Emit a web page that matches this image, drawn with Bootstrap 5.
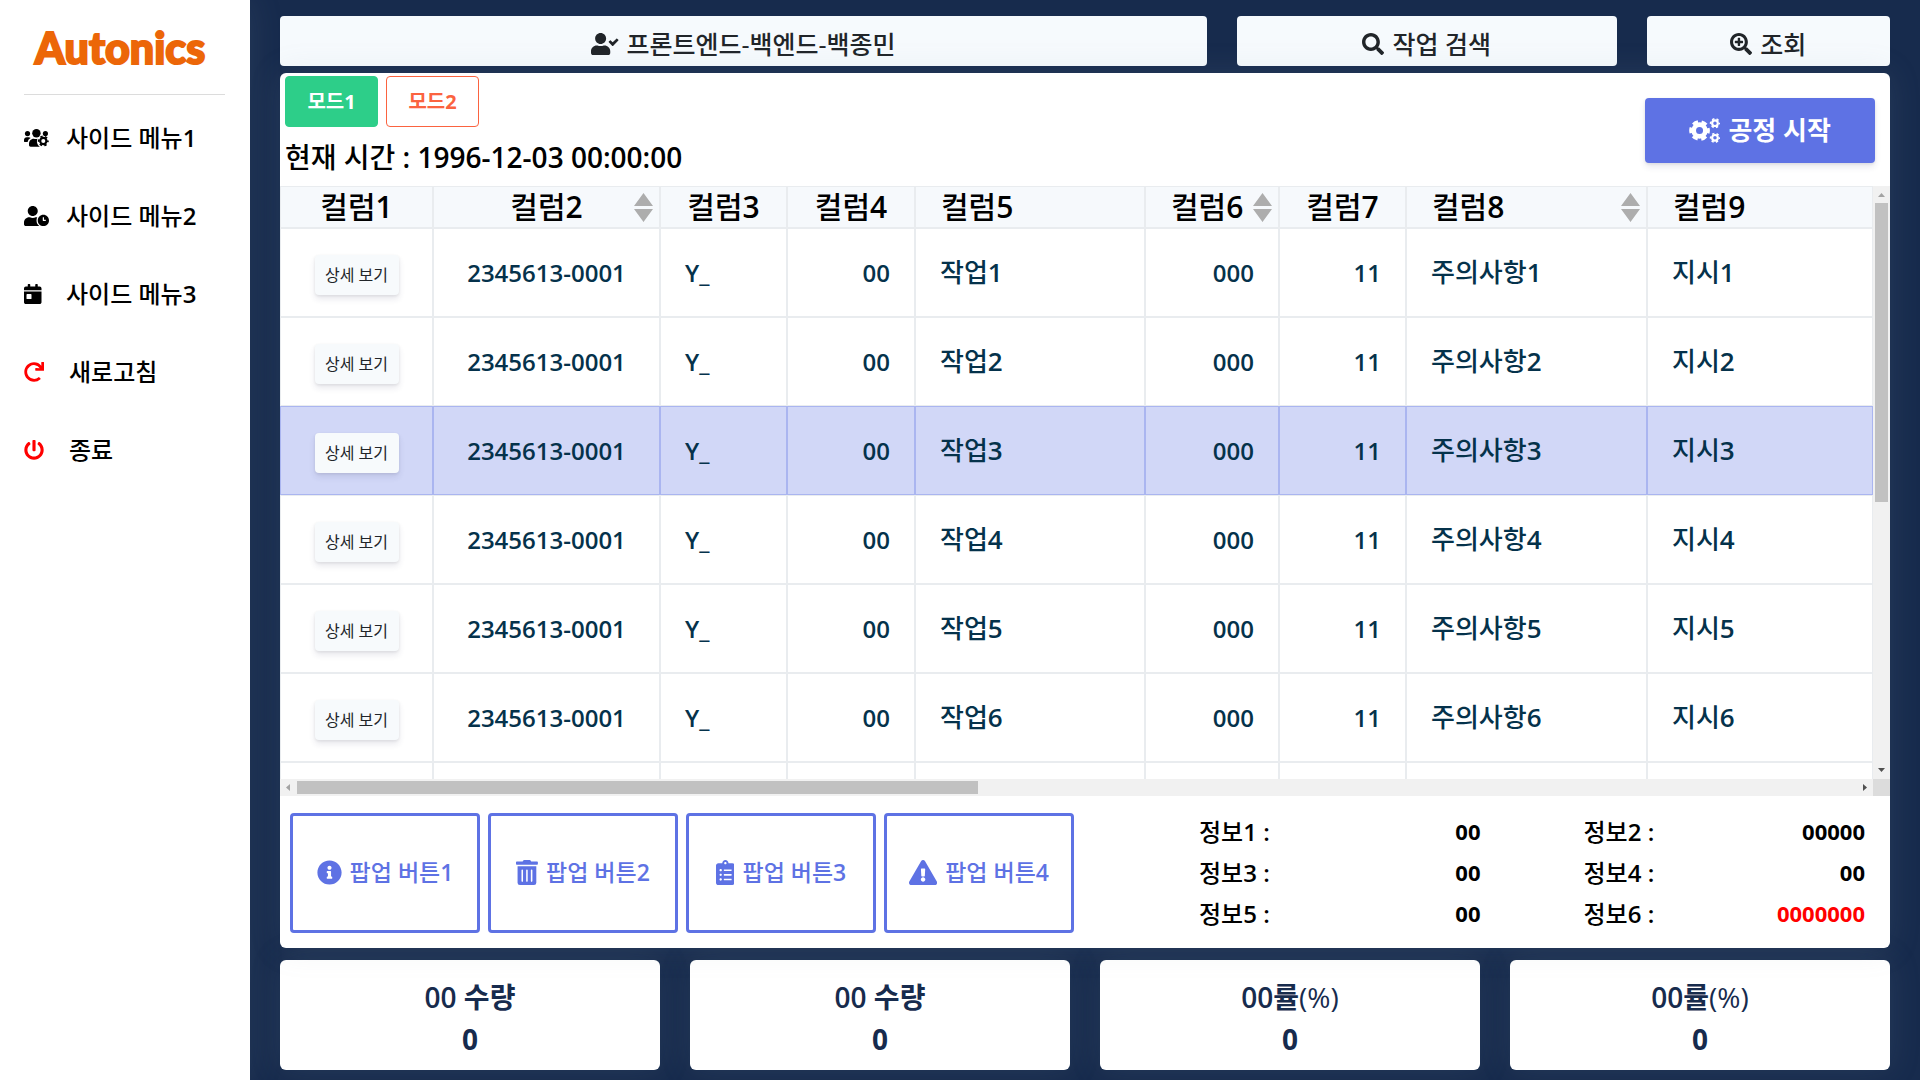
<!DOCTYPE html>
<html lang="ko">
<head>
<meta charset="utf-8">
<meta name="viewport" content="width=device-width, initial-scale=1">
<title>Autonics</title>
<link href="https://cdn.jsdelivr.net/npm/bootstrap@5.3.0/dist/css/bootstrap.min.css" rel="stylesheet">
<style>
:root { --navy: #172b4d; --indigo: #5e72e4; --line: #e9ecef; --glow: 0 0 32px rgba(136, 152, 170, .15); }
body { background: var(--navy); color: #000; font-family: "Open Sans", "Noto Sans CJK KR", sans-serif; font-weight: 500; line-height: 1.5; }
svg.ico { height: 1em; width: auto; fill: currentColor; flex: none; }
.side { width: 250px; flex: none; background: #fff; padding: 18px 24px; box-shadow: var(--glow); }
.brand { font: 900 43px/60px Lato, sans-serif; color: #ec6608; text-decoration: none; text-align: center; padding-right: 10px; -webkit-text-stroke: 2px #ec6608; }
.side-rule { border-top: 1px solid #dcdcdc; margin: 16px 1px 0 0; }
.side-nav { padding-top: 25px; gap: 42px; }
.side-link { color: #000; font-size: 24px; line-height: 36px; text-decoration: none; white-space: nowrap; }
.side-link svg { height: 20px; }
.side-ico { width: 42px; line-height: 1; display: flex; }
.side-link.alert-link-red .side-ico { color: #f00; width: 45px; }
.page { padding: 16px 30px 10px; min-width: 0; }
.gx-30 { --bs-gutter-x: 30px; }
.btn-top { background: #f6fafd; border: 0; border-radius: 4px; height: 50px; font-size: 25px; line-height: 36px; color: #212529; font-weight: 500; padding: 5px 12px 0; }
.btn-top:hover { background: #fff; }
.btn-top svg { height: 22px; }
.panel { background: #fff; border-radius: 6px; margin-top: 7px; box-shadow: var(--glow); min-height: 0; position: relative; }
.panel-head { height: 113px; padding: 3px 15px 0 5px; }
.btn-mode { width: 93px; height: 51px; font-size: 20px; font-weight: 700; border-radius: 4px; padding: 0; }
.btn-on { background: #2dce89; color: #fff; border: 1px solid #2dce89; }
.btn-off { background: #fff; color: #fb6340; border: 1px solid #fb6340; }
.clock { font-size: 28px; line-height: 36px; font-weight: 500; margin-top: 12px; }
.btn-start { background: var(--indigo); color: #fff; width: 230px; height: 65px; margin-top: 22px; font-size: 26px; font-weight: 700; border-radius: 4px; border: 0; box-shadow: 0 4px 6px rgba(50, 50, 93, .11), 0 1px 3px rgba(0, 0, 0, .08); }
.btn-start svg { height: 25px; }
.grid-port { min-height: 0; min-width: 0; overflow: hidden; }
.work { table-layout: fixed; width: 100%; min-width: 1590px; border-collapse: separate; border-spacing: 0; }
.work th, .work td { border: 1px solid var(--line); vertical-align: middle; white-space: nowrap; overflow: hidden; }
.work th { height: 42px; padding: 0 25px; background: #f6f9fc; font-size: 30px; line-height: 40px; font-weight: 500; position: relative; }
.work td { height: 89px; padding: 0 24px; color: #05324b; font-size: 26px; font-weight: 500; }
.work td.num { font-size: 24px; font-weight: 600; }
.work tr.picked td { background: #d1d7f7; border-color: #aab5f0; }
.sorter { position: absolute; right: 6px; top: 6px; width: 19px; height: 29px; fill: #adadad; }
.btn-detail { background: #f7fafc; color: #212529; width: 84px; height: 40px; margin-top: 4px; padding: 0; font-size: 16px; border: 0; border-radius: 4px; box-shadow: 0 4px 6px rgba(50, 50, 93, .11), 0 1px 3px rgba(0, 0, 0, .08); }
.bar { background: #f1f1f1; flex: none; }
.bar-v { width: 17px; }
.bar-h { height: 17px; }
.bar-corner { width: 17px; height: 17px; background: #dcdcdc; flex: none; }
.bar svg { width: 17px; height: 17px; flex: none; }
.lane { min-width: 0; min-height: 0; flex: 1; }
.thumb-v { background: #c1c1c1; height: 53.5%; margin: 0 2px; }
.thumb-h { background: #c1c1c1; width: 43.7%; height: 13px; margin-top: 2px; }
.panel-foot { padding: 15px 25px 14px 10px; }
.btn-pop { width: 190px; height: 120px; background: #fff; color: var(--indigo); border: 3px solid var(--indigo); border-radius: 4px; font-size: 23px; font-weight: 500; padding: 0; white-space: nowrap; }
.btn-pop svg { height: 25px; }
.facts { display: grid; grid-template-columns: 1fr 1fr; column-gap: 103px; margin: 0 0 0 125px; }
.facts dt { font-size: 24px; line-height: 41px; font-weight: 500; }
.facts dd { font-size: 22px; line-height: 41px; font-weight: 700; margin: 0; }
.facts .hot { color: #f00; }
.stats { margin-top: 12px; }
.stat { background: #fff; color: var(--navy); border-radius: 6px; height: 110px; padding-top: 16px; box-shadow: var(--glow); text-align: center; font-size: 28px; line-height: 42px; font-weight: 600; }
</style>
<script src="https://cdn.jsdelivr.net/npm/bootstrap@5.3.0/dist/js/bootstrap.bundle.min.js"></script>
</head>
<body>
<div class="d-flex vh-100 overflow-hidden">
  <aside class="side d-flex flex-column">
    <a class="brand" href="#">Autonics</a>
    <div class="side-rule"></div>
    <nav class="side-nav d-flex flex-column" aria-label="사이드 메뉴">
      <a class="side-link d-flex align-items-center" href="#"><span class="side-ico"><svg class="ico" viewBox="0 0 640 512" aria-hidden="true"><circle cx="90" cy="142" r="66"/><circle cx="318" cy="132" r="108"/><circle cx="548" cy="142" r="66"/><path d="M0 345v-35c0-45 30-76 72-76h45c22 0 40 8 54 22-42 22-68 52-78 102H14c-8 0-14-5-14-13z"/><path d="M128 440v-34c0-74 48-134 122-134 30 14 65 16 95 6-16 40-20 80-2 122 14 36 36 58 66 78H170c-24 0-42-16-42-40z"/><g fill="none" stroke="currentColor"><circle cx="494" cy="332" r="80" stroke-width="56"/><circle cx="494" cy="332" r="118" stroke-width="44" pathLength="12" stroke-dasharray="1 1" stroke-dashoffset=".5"/></g></svg></span><span>사이드 메뉴<span class="fw-semibold">1</span></span></a>
      <a class="side-link d-flex align-items-center" href="#"><span class="side-ico"><svg class="ico" viewBox="0 0 640 512" aria-hidden="true"><path d="M496 224c-79.600 0-144 64.400-144 144s64.400 144 144 144 144-64.400 144-144-64.400-144-144-144zm64 150.300c0 5.300-4.400 9.700-9.700 9.700h-60.600c-5.300 0-9.700-4.400-9.700-9.700v-76.600c0-5.300 4.400-9.700 9.700-9.700h12.600c5.300 0 9.700 4.400 9.700 9.700V352h38.300c5.300 0 9.700 4.400 9.700 9.700v12.600zM320 368c0-27.800 6.700-54.100 18.200-77.500-8-1.500-16.200-2.500-24.600-2.500h-16.700c-22.200 10.200-46.900 16-72.900 16s-50.600-5.800-72.900-16h-16.700C60.200 288 0 348.200 0 422.400V464c0 26.500 21.500 48 48 48h347.100c-45.300-31.900-75.100-84.500-75.100-144zm-96-112c70.700 0 128-57.300 128-128S294.700 0 224 0 96 57.300 96 128s57.300 128 128 128z"/></svg></span><span>사이드 메뉴<span class="fw-semibold">2</span></span></a>
      <a class="side-link d-flex align-items-center" href="#"><span class="side-ico"><svg class="ico" viewBox="0 0 448 512" aria-hidden="true"><path d="M0 464c0 26.500 21.500 48 48 48h352c26.500 0 48-21.500 48-48V192H0v272zm64-192c0-8.800 7.200-16 16-16h96c8.800 0 16 7.200 16 16v96c0 8.800-7.200 16-16 16H80c-8.800 0-16-7.200-16-16v-96zM400 64h-48V16c0-8.800-7.200-16-16-16h-32c-8.800 0-16 7.200-16 16v48H160V16c0-8.800-7.200-16-16-16h-32c-8.800 0-16 7.200-16 16v48H48C21.500 64 0 85.500 0 112v48h448v-48c0-26.500-21.500-48-48-48z"/></svg></span><span>사이드 메뉴<span class="fw-semibold">3</span></span></a>
      <a class="side-link alert-link-red d-flex align-items-center" href="#"><span class="side-ico"><svg class="ico" viewBox="0 0 512 512" aria-hidden="true"><path d="M500.330 0h-47.410a12 12 0 0 0-12 12.570l4 82.760A247.420 247.420 0 0 0 256 8C119.340 8 7.900 119.530 8 256.190 8.100 393.070 119.100 504 256 504a247.100 247.100 0 0 0 166.180-63.910 12 12 0 0 0 .48-17.430l-34-34a12 12 0 0 0-16.380-.55A176 176 0 1 1 402.100 157.800l-101.530-4.870a12 12 0 0 0-12.570 12v47.410a12 12 0 0 0 12 12h200.330a12 12 0 0 0 12-12V12a12 12 0 0 0-12-12z"/></svg></span>새로고침</a>
      <a class="side-link alert-link-red d-flex align-items-center" href="#"><span class="side-ico"><svg class="ico" viewBox="0 0 512 512" aria-hidden="true"><path d="M400 54.100c63 45 104 118.600 104 201.900 0 136.800-110.800 247.700-247.500 248C120 504.300 8.200 393 8 256.400 7.900 173.100 48.900 99.300 111.800 54.200c11.700-8.300 28-4.800 35 7.700L162.600 90c5.900 10.500 3.100 23.800-6.600 31-41.500 30.800-68 79.600-68 134.900-.1 92.300 74.500 168.100 168 168.100 91.600 0 168.600-74.200 168-169.100-.3-51.800-24.700-101.800-68.100-134-9.700-7.200-12.400-20.500-6.500-30.900l15.800-28.100c7-12.400 23.200-16.100 34.800-7.800zM296 264V24c0-13.300-10.700-24-24-24h-32c-13.300 0-24 10.700-24 24v240c0 13.300 10.700 24 24 24h32c13.300 0 24-10.700 24-24z"/></svg></span>종료</a>
    </nav>
  </aside>

  <main class="page flex-fill d-flex flex-column">
    <div class="row gx-30">
      <div class="col-7"><button type="button" class="btn btn-top w-100 d-flex align-items-center justify-content-center gap-2"><svg class="ico" viewBox="0 0 640 512" aria-hidden="true"><path d="M224 256c70.700 0 128-57.300 128-128S294.700 0 224 0 96 57.300 96 128s57.300 128 128 128zm89.600 32h-16.700c-22.200 10.200-46.900 16-72.900 16s-50.600-5.800-72.900-16h-16.700C60.200 288 0 348.200 0 422.400V464c0 26.500 21.500 48 48 48h352c26.500 0 48-21.500 48-48v-41.600c0-74.200-60.200-134.400-134.400-134.400z"/><path d="M636.600 159.600l-28.300-28.500c-4.700-4.800-12.400-4.800-17.200 0L504.300 217.600l-44.900-45.300c-4.700-4.800-12.400-4.800-17.100-.1l-28.400 28.300c-4.700 4.700-4.800 12.400-.1 17.100l81.900 82.600c4.700 4.800 12.400 4.800 17.100.1L636.500 176.700c4.800-4.700 4.800-12.400.1-17.100z"/></svg>프론트엔드-백엔드-백종민</button></div>
      <div class="col-3"><button type="button" class="btn btn-top w-100 d-flex align-items-center justify-content-center gap-2"><svg class="ico" viewBox="0 0 512 512" aria-hidden="true"><path d="M505 442.700L405.300 343c-4.500-4.500-10.600-7-17-7H372c27.600-35.300 44-79.700 44-128C416 93.100 322.900 0 208 0S0 93.100 0 208s93.100 208 208 208c48.300 0 92.700-16.400 128-44v16.300c0 6.400 2.500 12.500 7 17l99.700 99.700c9.400 9.400 24.600 9.400 33.900 0l28.300-28.300c9.400-9.400 9.400-24.600.1-34zM208 336c-70.700 0-128-57.200-128-128 0-70.700 57.200-128 128-128 70.700 0 128 57.200 128 128 0 70.700-57.200 128-128 128z"/></svg>작업 검색</button></div>
      <div class="col-2"><button type="button" class="btn btn-top w-100 d-flex align-items-center justify-content-center gap-2"><svg class="ico" viewBox="0 0 512 512" aria-hidden="true"><path d="M505 442.700L405.300 343c-4.500-4.500-10.600-7-17-7H372c27.600-35.300 44-79.700 44-128C416 93.100 322.900 0 208 0S0 93.100 0 208s93.100 208 208 208c48.300 0 92.700-16.400 128-44v16.300c0 6.400 2.500 12.500 7 17l99.700 99.700c9.400 9.400 24.600 9.400 33.900 0l28.300-28.300c9.400-9.400 9.400-24.600.1-34zM208 344c-75.200 0-136-60.800-136-136 0-75.200 60.800-136 136-136 75.200 0 136 60.800 136 136 0 75.200-60.800 136-136 136z"/><path d="M304 192v32c0 6.600-5.400 12-12 12h-56v56c0 6.600-5.400 12-12 12h-32c-6.600 0-12-5.400-12-12v-56h-56c-6.600 0-12-5.400-12-12v-32c0-6.600 5.400-12 12-12h56v-56c0-6.600 5.400-12 12-12h32c6.600 0 12 5.400 12 12v56h56c6.600 0 12 5.400 12 12z"/></svg>조회</button></div>
    </div>

    <section class="panel flex-fill d-flex flex-column">
      <div class="panel-head d-flex justify-content-between align-items-start">
        <div>
          <div class="d-flex gap-2">
            <button type="button" class="btn btn-mode btn-on">모드1</button>
            <button type="button" class="btn btn-mode btn-off">모드2</button>
          </div>
          <div class="clock">현재 시간 <span class="fw-semibold">: 1996-12-03 00:00:00</span></div>
        </div>
        <button type="button" class="btn btn-start d-flex align-items-center justify-content-center gap-2"><svg class="ico" viewBox="0 0 640 512" aria-hidden="true"><g fill="none" stroke="currentColor"><circle cx="216" cy="256" r="120" stroke-width="96"/><circle cx="216" cy="256" r="182" stroke-width="60" pathLength="12" stroke-dasharray="1.200 .8" stroke-dashoffset=".6"/><circle cx="532" cy="106" r="58" stroke-width="44"/><circle cx="532" cy="106" r="90" stroke-width="32" pathLength="12" stroke-dasharray="1 1" stroke-dashoffset=".5"/><circle cx="532" cy="406" r="58" stroke-width="44"/><circle cx="532" cy="406" r="90" stroke-width="32" pathLength="12" stroke-dasharray="1 1" stroke-dashoffset=".5"/></g></svg>공정 시작</button>
      </div>

      <div class="d-flex lane">
        <div class="grid-port flex-fill">
          <table class="work">
            <colgroup><col style="width:153px"><col style="width:227px"><col style="width:127px"><col style="width:128px"><col style="width:230px"><col style="width:134px"><col style="width:127px"><col style="width:241px"><col></colgroup>
            <thead>
              <tr>
                <th class="text-center">컬럼<span class="fw-semibold">1</span></th>
                <th class="text-center">컬럼<span class="fw-semibold">2</span><svg class="sorter" viewBox="0 0 19 29" aria-hidden="true"><path d="M9.500 0L19 13H0zM0 16h19L9.500 29z"/></svg></th>
                <th class="text-center">컬럼<span class="fw-semibold">3</span></th>
                <th class="text-center">컬럼<span class="fw-semibold">4</span></th>
                <th>컬럼<span class="fw-semibold">5</span></th>
                <th>컬럼<span class="fw-semibold">6</span><svg class="sorter" viewBox="0 0 19 29" aria-hidden="true"><path d="M9.500 0L19 13H0zM0 16h19L9.500 29z"/></svg></th>
                <th class="text-center">컬럼<span class="fw-semibold">7</span></th>
                <th>컬럼<span class="fw-semibold">8</span><svg class="sorter" viewBox="0 0 19 29" aria-hidden="true"><path d="M9.500 0L19 13H0zM0 16h19L9.500 29z"/></svg></th>
                <th>컬럼<span class="fw-semibold">9</span></th>
              </tr>
            </thead>
            <tbody id="rows"></tbody>
          </table>
        </div>
        <div class="bar bar-v d-flex flex-column" aria-hidden="true">
          <svg viewBox="0 0 17 17" fill="#a3a3a3"><path d="M5 11h7L8.500 7z"/></svg>
          <div class="lane"><div class="thumb-v"></div></div>
          <svg viewBox="0 0 17 17" fill="#505050"><path d="M5 6h7L8.500 10z"/></svg>
        </div>
      </div>
      <div class="d-flex" aria-hidden="true">
        <div class="bar bar-h d-flex flex-fill">
          <svg viewBox="0 0 17 17" fill="#a3a3a3"><path d="M10 5v7L6 8.500z"/></svg>
          <div class="lane"><div class="thumb-h"></div></div>
          <svg viewBox="0 0 17 17" fill="#505050"><path d="M7 5v7l4-3.500z"/></svg>
        </div>
        <div class="bar-corner"></div>
      </div>

      <div class="panel-foot d-flex align-items-center">
        <div class="d-flex gap-2">
          <button type="button" class="btn btn-pop d-flex align-items-center justify-content-center gap-2"><svg class="ico" viewBox="0 0 512 512" aria-hidden="true"><path d="M256 8C119.043 8 8 119.083 8 256c0 136.997 111.043 248 248 248s248-111.003 248-248C504 119.083 392.957 8 256 8zm0 110c23.196 0 42 18.804 42 42s-18.804 42-42 42-42-18.804-42-42 18.804-42 42-42zm56 254c0 6.627-5.373 12-12 12h-88c-6.627 0-12-5.373-12-12v-24c0-6.627 5.373-12 12-12h12v-64h-12c-6.627 0-12-5.373-12-12v-24c0-6.627 5.373-12 12-12h64c6.627 0 12 5.373 12 12v100h12c6.627 0 12 5.373 12 12v24z"/></svg><span>팝업 버튼<span class="fw-semibold">1</span></span></button>
          <button type="button" class="btn btn-pop d-flex align-items-center justify-content-center gap-2"><svg class="ico" viewBox="0 0 448 512" aria-hidden="true"><path d="M32 464a48 48 0 0 0 48 48h288a48 48 0 0 0 48-48V128H32zm272-256a16 16 0 0 1 32 0v224a16 16 0 0 1-32 0zm-96 0a16 16 0 0 1 32 0v224a16 16 0 0 1-32 0zm-96 0a16 16 0 0 1 32 0v224a16 16 0 0 1-32 0zM432 32H312l-9.400-18.700A24 24 0 0 0 281.100 0H166.800a23.720 23.720 0 0 0-21.400 13.300L136 32H16A16 16 0 0 0 0 48v32a16 16 0 0 0 16 16h416a16 16 0 0 0 16-16V48a16 16 0 0 0-16-16z"/></svg><span>팝업 버튼<span class="fw-semibold">2</span></span></button>
          <button type="button" class="btn btn-pop d-flex align-items-center justify-content-center gap-2"><svg class="ico" viewBox="0 0 384 512" aria-hidden="true"><path d="M336 64h-80c0-35.300-28.700-64-64-64s-64 28.700-64 64H48C21.500 64 0 85.500 0 112v352c0 26.500 21.500 48 48 48h288c26.500 0 48-21.500 48-48V112c0-26.500-21.500-48-48-48zM96 424c-13.300 0-24-10.700-24-24s10.700-24 24-24 24 10.700 24 24-10.700 24-24 24zm0-96c-13.300 0-24-10.700-24-24s10.700-24 24-24 24 10.700 24 24-10.700 24-24 24zm0-96c-13.300 0-24-10.700-24-24s10.700-24 24-24 24 10.700 24 24-10.700 24-24 24zm96-192c13.300 0 24 10.700 24 24s-10.700 24-24 24-24-10.700-24-24 10.700-24 24-24zm128 368c0 4.400-3.600 8-8 8H168c-4.400 0-8-3.600-8-8v-16c0-4.400 3.600-8 8-8h144c4.400 0 8 3.600 8 8v16zm0-96c0 4.400-3.600 8-8 8H168c-4.400 0-8-3.600-8-8v-16c0-4.400 3.600-8 8-8h144c4.400 0 8 3.600 8 8v16zm0-96c0 4.400-3.600 8-8 8H168c-4.400 0-8-3.600-8-8v-16c0-4.400 3.600-8 8-8h144c4.400 0 8 3.600 8 8v16z"/></svg><span>팝업 버튼<span class="fw-semibold">3</span></span></button>
          <button type="button" class="btn btn-pop d-flex align-items-center justify-content-center gap-2"><svg class="ico" viewBox="0 0 576 512" aria-hidden="true"><path d="M569.517 440.013C587.975 472.007 564.806 512 527.940 512H48.054c-36.937 0-59.999-40.055-41.577-71.987L246.423 23.985c18.467-32.009 64.720-31.951 83.154 0l239.940 416.028zM288 354c-25.405 0-46 20.595-46 46s20.595 46 46 46 46-20.595 46-46-20.595-46-46-46zm-43.673-165.346l7.418 136c.347 6.364 5.609 11.346 11.982 11.346h48.546c6.373 0 11.635-4.982 11.982-11.346l7.418-136c.375-6.874-5.098-12.654-11.982-12.654h-63.383c-6.884 0-12.356 5.780-11.981 12.654z"/></svg><span>팝업 버튼<span class="fw-semibold">4</span></span></button>
        </div>
        <dl class="facts flex-fill">
          <div class="d-flex justify-content-between"><dt>정보<span class="fw-semibold">1 :</span></dt><dd>00</dd></div>
          <div class="d-flex justify-content-between"><dt>정보<span class="fw-semibold">2 :</span></dt><dd>00000</dd></div>
          <div class="d-flex justify-content-between"><dt>정보<span class="fw-semibold">3 :</span></dt><dd>00</dd></div>
          <div class="d-flex justify-content-between"><dt>정보<span class="fw-semibold">4 :</span></dt><dd>00</dd></div>
          <div class="d-flex justify-content-between"><dt>정보<span class="fw-semibold">5 :</span></dt><dd>00</dd></div>
          <div class="d-flex justify-content-between"><dt>정보<span class="fw-semibold">6 :</span></dt><dd class="hot">0000000</dd></div>
        </dl>
      </div>
    </section>

    <div class="row gx-30 stats">
      <div class="col-3"><div class="stat"><div>00 수량</div><div class="fw-bold">0</div></div></div>
      <div class="col-3"><div class="stat"><div>00 수량</div><div class="fw-bold">0</div></div></div>
      <div class="col-3"><div class="stat"><div>00률<span class="fw-normal">(%)</span></div><div class="fw-bold">0</div></div></div>
      <div class="col-3"><div class="stat"><div>00률<span class="fw-normal">(%)</span></div><div class="fw-bold">0</div></div></div>
    </div>
  </main>
</div>
<script>
const rows = document.getElementById('rows');
for (let n = 1; n <= 6; n++) {
  const no = `<span class="fw-semibold">${n}</span>`;
  rows.insertAdjacentHTML('beforeend', `<tr class="${n === 3 ? 'picked' : ''}">
    <td class="text-center"><button type="button" class="btn btn-detail">상세 보기</button></td>
    <td class="num text-center">2345613-0001</td><td class="num">Y_</td><td class="num text-end">00</td>
    <td>작업${no}</td><td class="num text-end">000</td><td class="num text-end">11</td>
    <td>주의사항${no}</td><td>지시${no}</td></tr>`);
}
// trailing blank row
rows.insertAdjacentHTML('beforeend', '<tr>' + '<td></td>'.repeat(9) + '</tr>');
</script>
</body>
</html>
